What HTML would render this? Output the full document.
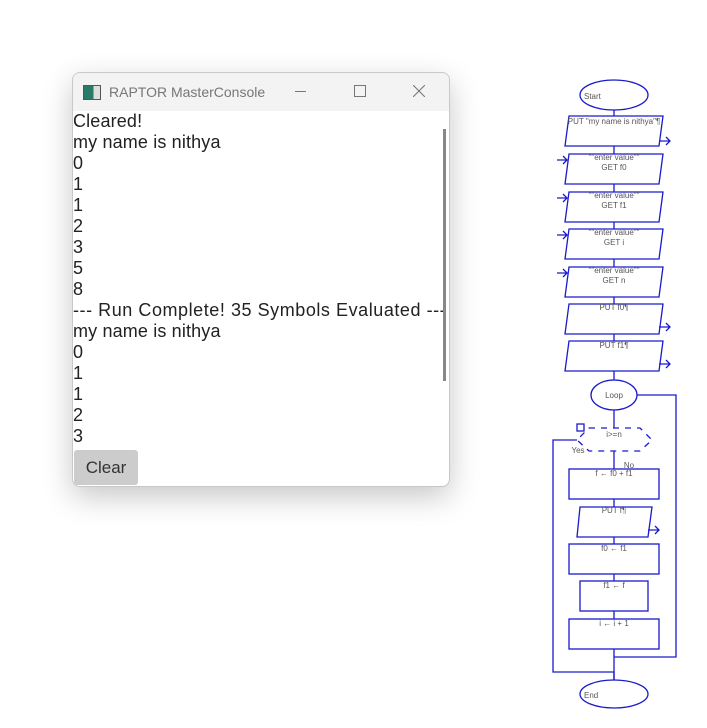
<!DOCTYPE html>
<html><head><meta charset="utf-8"><style>
body{margin:0;width:707px;height:728px;background:#fff;position:relative;overflow:hidden;font-family:"Liberation Sans","DejaVu Sans",sans-serif}
.win{position:absolute;left:72px;top:72px;width:376px;height:413px;border:1px solid #c8c8c8;border-radius:8px;background:#fff;box-shadow:0 10px 30px rgba(0,0,0,.22);overflow:hidden}
.tb{height:38px;background:#f3f3f3;position:relative;color:#777;font-size:14px}
.tb .t{position:absolute;left:36px;top:11px}
.ico{position:absolute;left:10px;top:12px;width:16px;height:13px;border:1px solid #555;background:linear-gradient(90deg,#2a7a6a 60%,#ddd 60%)}
.out{position:absolute;left:0;top:38px;font-size:18px;line-height:21px;color:#222;white-space:pre;letter-spacing:0.15px}
.sb{position:absolute;left:370px;top:56px;width:3px;height:252px;background:#888}
.btn{position:absolute;left:1px;top:377px;width:64px;height:35px;background:#ccc;border-radius:3px;font-size:17px;color:#333;text-align:center;line-height:35px}
svg{position:absolute;left:0;top:0}
</style></head><body>
<div class="win"><div class="tb"><div class="ico"></div><span class="t">RAPTOR MasterConsole</span>
<span style="position:absolute;left:222px;top:18px;width:11px;height:1px;background:#777"></span>
<span style="position:absolute;left:281px;top:12px;width:10px;height:10px;border:1px solid #777"></span>
<svg style="position:absolute;left:340px;top:12px" width="12" height="12"><path d="M0,0L12,12M12,0L0,12" stroke="#777" stroke-width="1.1"/></svg></div>
<div class="out">Cleared!
my name is nithya
0
1
1
2
3
5
8
<span style="letter-spacing:0.55px">--- Run Complete! 35 Symbols Evaluated ---</span>
my name is nithya
0
1
1
2
3</div><div class="sb"></div><div class="btn">Clear</div></div>
<svg width="707" height="728" font-family="Liberation Sans" font-size="8" fill="none" stroke="#1a1acc" stroke-width="1.3">
<line x1="614" y1="110" x2="614" y2="380"/>
<line x1="614" y1="410" x2="614" y2="680"/>
<ellipse cx="614" cy="95" rx="34" ry="15" fill="#fff"/>
<g fill="#fff">
<polygon points="569,116 663,116 659,146 565,146"/>
<polygon points="569,154 663,154 659,184 565,184"/>
<polygon points="569,192 663,192 659,222 565,222"/>
<polygon points="569,229 663,229 659,259 565,259"/>
<polygon points="569,267 663,267 659,297 565,297"/>
<polygon points="569,304 663,304 659,334 565,334"/>
<polygon points="569,341 663,341 659,371 565,371"/>
<ellipse cx="614" cy="395" rx="23" ry="15"/>
<rect x="569" y="469" width="90" height="30"/>
<polygon points="580,507 652,507 648,537 577,537"/>
<rect x="569" y="544" width="90" height="30"/>
<rect x="580" y="581" width="68" height="30"/>
<rect x="569" y="619" width="90" height="30"/>
<ellipse cx="614" cy="694" rx="34" ry="14"/>
</g>
<polygon points="589,428 640,428 652,440 640,451 589,451 577,440" fill="#fff" stroke-dasharray="6,6"/>
<rect x="577" y="424" width="7" height="7"/>
<polyline points="637,395 676,395 676,657 614,657"/>
<polyline points="577,440 553,440 553,672 614,672 614,680"/>
<g>
<path d="M659,141H670M666,137L670,141L666,145"/>
<path d="M659,327H670M666,323L670,327L666,331"/>
<path d="M659,364H670M666,360L670,364L666,368"/>
<path d="M648,530H659M655,526L659,530L655,534"/>
<path d="M557,160H567M563,156L567,160L563,164"/>
<path d="M557,198H567M563,194L567,198L563,202"/>
<path d="M557,235H567M563,231L567,235L563,239"/>
<path d="M557,273H567M563,269L567,273L563,277"/>
</g>
<g fill="#555" stroke="none" text-anchor="middle">
<text x="584" y="99" text-anchor="start">Start</text>
<text x="614" y="124">PUT "my name is nithya"¶</text>
<text x="614" y="160">""enter value""</text><text x="614" y="170">GET f0</text>
<text x="614" y="198">""enter value""</text><text x="614" y="208">GET f1</text>
<text x="614" y="235">""enter value""</text><text x="614" y="245">GET i</text>
<text x="614" y="273">""enter value""</text><text x="614" y="283">GET n</text>
<text x="614" y="310">PUT f0¶</text>
<text x="614" y="348">PUT f1¶</text>
<text x="614" y="398">Loop</text>
<text x="614" y="437">i&gt;=n</text>
<text x="578" y="453">Yes</text>
<text x="629" y="468">No</text>
<text x="614" y="476">f ← f0 + f1</text>
<text x="614" y="513">PUT f¶</text>
<text x="614" y="551">f0 ← f1</text>
<text x="614" y="588">f1 ← f</text>
<text x="614" y="626">i ← i + 1</text>
<text x="584" y="698" text-anchor="start">End</text>
</g>
</svg>
</body></html>
